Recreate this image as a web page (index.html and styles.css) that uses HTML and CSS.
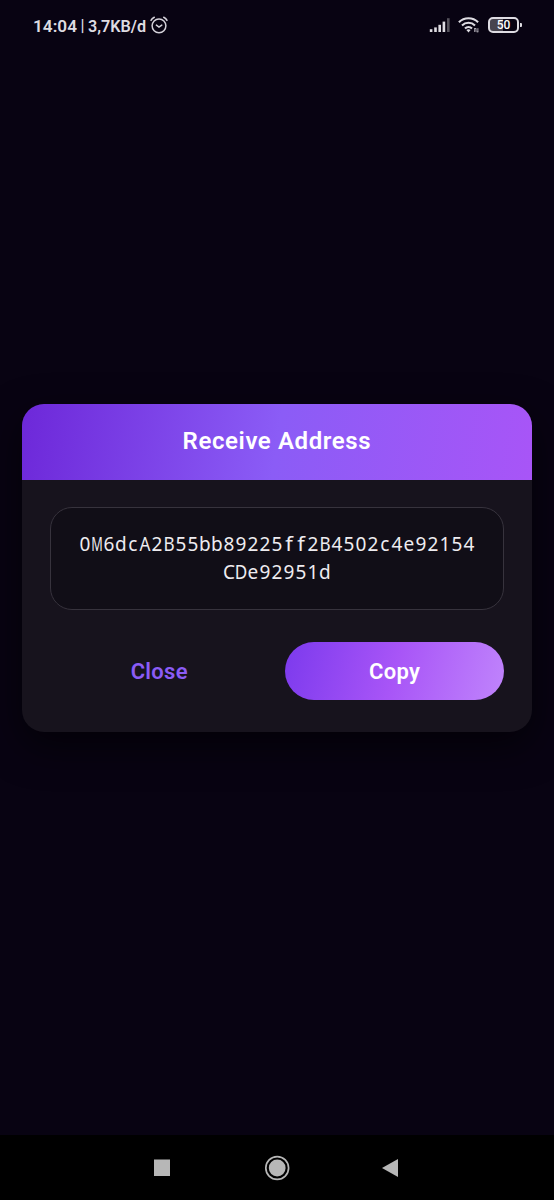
FILE: index.html
```html
<!DOCTYPE html>
<html lang="en">
<head>
<meta charset="utf-8">
<title>Receive Address</title>
<link rel="stylesheet" href="styles.css">
</head>
<body>
<div class="screen">
  <header class="status">
    <span class="clock">14:04</span><span class="bar">|</span><span class="rate">3,7KB/d</span>
    <svg class="alarm" width="18" height="18" viewBox="0 0 18 18" fill="none" stroke="#d4d1d9" stroke-width="1.5" stroke-linecap="round"><circle cx="9" cy="9.8" r="6.9"/><path d="M1 4.4Q1.9 2.4 4.3 1.3M17 4.4Q16.1 2.4 13.7 1.3M6.4 9.1 9 11.1 11.8 9.1"/></svg>
    <div class="indicators">
      <svg width="21" height="16" viewBox="0 0 21 16"><g fill="#dedce2"><rect x="0.8" y="12.2" width="2.6" height="2.8"/><rect x="5.2" y="10.4" width="2.6" height="4.6"/><rect x="9.4" y="7.8" width="2.6" height="7.2"/><rect x="13.6" y="4.6" width="2.6" height="10.4"/></g><rect x="18" y="1.2" width="2.6" height="13.8" fill="#55525b"/></svg>
      <svg class="wifi" width="23" height="18" viewBox="0 0 23 18"><g fill="none" stroke="#dedce2" stroke-width="2.1"><path d="M0.9 6.2A13.6 13.6 0 0 1 20.1 6.2M4 9.5A9.2 9.2 0 0 1 17 9.5M7 12.6A5 5 0 0 1 14 12.6"/></g><path d="M8.4 14.1Q10.5 12.4 12.6 14.1L10.5 16.4Z" fill="#dedce2"/><path d="M16.7 12v4M18 12.6v3.2M19.9 12.2v4M16.4 12.5h1.8M18.6 15.8h1.6" fill="none" stroke="#aaa7b0"/></svg>
      <div class="battery"><span>50</span></div>
    </div>
  </header>
  <main class="stage">
    <section class="card">
      <h1 class="title">Receive Address</h1>
      <div class="body">
        <div class="address"><div class="line">0M6dcA2B55bb89225ff2B4502c4e92154</div><div class="line">CDe92951d</div></div>
        <div class="actions">
          <button class="btn">Close</button>
          <button class="btn copy">Copy</button>
        </div>
      </div>
    </section>
  </main>
  <nav class="nav">
    <svg width="554" height="65" viewBox="0 0 554 65"><g fill="#b7b7b7"><rect x="154" y="24.5" width="16" height="16.5"/><circle cx="277.2" cy="33" r="8.4"/><path d="M382 33 398 24V42Z"/></g><circle cx="277.2" cy="33" r="11.4" fill="none" stroke="#b7b7b7" stroke-width="1.7"/></svg>
  </nav>
</div>
<script src="address.js"></script>
</body>
</html>
```
FILE: styles.css
```css
* { box-sizing: border-box; }
body { margin: 0; background: #080312; font-family: Roboto, sans-serif; }
.screen { width: 554px; height: 1200px; display: flex; flex-direction: column; overflow: hidden; }
.status { height: 52px; flex: none; display: flex; align-items: center; padding: 0 32px 0 33px; color: #dedce2; font-weight: 600; }
.clock { font-size: 17.2px; }
.bar { font-size: 16px; font-weight: 500; margin: 0 3.5px 1px; }
.rate { font-size: 16.2px; }
.alarm { margin-left: 4px; margin-top: -2px; }
.indicators { margin-left: auto; display: flex; align-items: center; gap: 8px; padding-bottom: 2px; }
.wifi { margin-right: -1px; }
.battery { position: relative; width: 31px; height: 16px; border: 2px solid #dedce2; border-radius: 5px; display: flex; align-items: center; justify-content: center; font-size: 12px; font-weight: 500; background: linear-gradient(90deg, #47444e 48%, transparent 48%); color: #fff; margin-right: 3px; }
.battery::after { content: ""; position: absolute; right: -5px; top: 4px; width: 2px; height: 4px; background: #dedce2; border-radius: 0 1px 1px 0; }
.stage { flex: 1; padding: 351.5px 22.5px 0 22.3px; }
.card { height: 328px; border-radius: 22px; background: #17131d; overflow: hidden; box-shadow: 0 14px 38px rgba(0, 0, 0, 0.6); }
.title { margin: 0; height: 76px; display: flex; align-items: center; justify-content: center; padding-bottom: 2px; background: linear-gradient(98.5deg, #6d28d9 0%, #8b5cf6 50%, #a855f7 100%); color: #fff; font-size: 24px; font-weight: 600; letter-spacing: 0.6px; }
.body { padding: 27.5px 27.5px 32px; }
.address { height: 102.5px; border: 1.5px solid #37333d; border-radius: 22px; background: #110e17; padding-top: 22.5px; color: #eeecf0; font-family: "Noto Sans", sans-serif; font-size: 19px; }
.line { height: 28px; line-height: 27px; display: flex; justify-content: center; }
.cell { width: 12px; display: flex; justify-content: center; }
.cell-wide { transform: scaleX(0.67); }
.cell-snug { transform: scaleX(0.9); }
.cell-narrow { transform: scaleX(1.15); }
.actions { display: flex; gap: 16.5px; margin-top: 32px; }
.btn { flex: 1; height: 58px; padding: 1px 0 0; border: 0; border-radius: 29px; background: none; color: #8b5cf6; font: 600 22px Roboto, sans-serif; letter-spacing: 0.3px; }
.copy { color: #fff; background: linear-gradient(104.8deg, #7c3aed 0%, #a855f7 50%, #c084fc 100%); }
.nav { flex: none; height: 65px; background: #000; }
.nav svg { display: block; }
```
FILE: address.js
```js
// Set each address character in an equal-width cell.
const shape = { M: "cell-wide", D: "cell-snug", A: "cell-snug", B: "cell-snug", f: "cell-narrow" };
for (const line of document.querySelectorAll(".line")) {
  const text = line.textContent;
  line.textContent = "";
  for (const ch of text) {
    const cell = document.createElement("span");
    cell.className = "cell " + (shape[ch] || "");
    cell.textContent = ch;
    line.append(cell);
  }
}
```
